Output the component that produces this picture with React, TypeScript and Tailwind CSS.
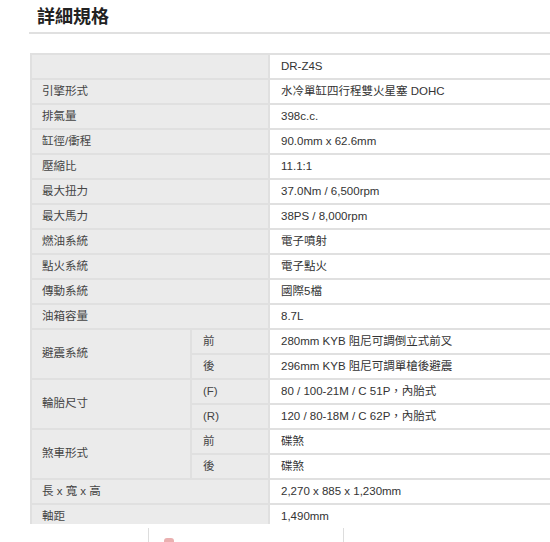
type Row = {
  label: string;
  value?: string;
  subs?: { key: string; value: string }[];
};

const rows: Row[] = [
  { label: '', value: 'DR-Z4S' },
  { label: '引擎形式', value: '水冷單缸四行程雙火星塞 DOHC' },
  { label: '排氣量', value: '398c.c.' },
  { label: '缸徑/衝程', value: '90.0mm x 62.6mm' },
  { label: '壓縮比', value: '11.1:1' },
  { label: '最大扭力', value: '37.0Nm / 6,500rpm' },
  { label: '最大馬力', value: '38PS / 8,000rpm' },
  { label: '燃油系統', value: '電子噴射' },
  { label: '點火系統', value: '電子點火' },
  { label: '傳動系統', value: '國際5檔' },
  { label: '油箱容量', value: '8.7L' },
  {
    label: '避震系統',
    subs: [
      { key: '前', value: '280mm KYB 阻尼可調倒立式前叉' },
      { key: '後', value: '296mm KYB 阻尼可調單槍後避震' },
    ],
  },
  {
    label: '輪胎尺寸',
    subs: [
      { key: '(F)', value: '80 / 100-21M / C 51P，內胎式' },
      { key: '(R)', value: '120 / 80-18M / C 62P，內胎式' },
    ],
  },
  {
    label: '煞車形式',
    subs: [
      { key: '前', value: '碟煞' },
      { key: '後', value: '碟煞' },
    ],
  },
  { label: '長 x 寬 x 高', value: '2,270 x 885 x 1,230mm' },
  { label: '軸距', value: '1,490mm' },
];

const cell = 'border-2 border-[#e0e0e0] h-[25px] p-0 align-middle';

export default function App() {
  return (
    <div
      className="relative w-[550px] h-[542px] overflow-hidden bg-white text-[#333]"
      style={{ fontFamily: '"Liberation Sans", "Noto Sans CJK TC", sans-serif' }}
    >
      <h2 className="ml-[37px] pt-[4px] h-[32px] text-[18px] font-semibold text-[#222] leading-[26px]">
        詳細規格
      </h2>
      <div className="ml-[29px] border-t-2 border-[#e0e0e0]" />

      <table className="ml-[30px] mt-[19px] border-collapse w-[560px] text-[11.5px] leading-none">
        <colgroup>
          <col className="w-[160px]" />
          <col className="w-[78px]" />
          <col />
        </colgroup>
        <tbody>
          {rows.map((row) =>
            row.subs ? (
              row.subs.map((sub, i) => (
                <tr key={row.label + sub.key}>
                  {i === 0 && (
                    <td rowSpan={2} className={`${cell} bg-[#ebebeb] pl-[10px] text-[#444]`}>
                      {row.label}
                    </td>
                  )}
                  <td className={`${cell} bg-[#ebebeb] pl-[11px] text-[#444]`}>{sub.key}</td>
                  <td className={`${cell} pl-[11px]`}>{sub.value}</td>
                </tr>
              ))
            ) : (
              <tr key={row.label + row.value}>
                <td colSpan={2} className={`${cell} bg-[#ebebeb] pl-[10px] text-[#444]`}>
                  {row.label}
                </td>
                <td className={`${cell} pl-[11px]`}>{row.value}</td>
              </tr>
            )
          )}
        </tbody>
      </table>

      {/* bottom bar */}
      <div className="absolute left-0 right-0 bottom-0 h-[18px] bg-white flex">
        <div className="w-[148px]" />
        <div className="w-[195px] border-l border-[#ddd] mt-[4px] relative">
          <span className="absolute left-[15px] top-[10px] w-[10px] h-[6px] rounded-t-[3px] bg-[#eab0b0]" />
        </div>
        <div className="flex-1 border-l border-[#ddd] mt-[4px]" />
      </div>
    </div>
  );
}
